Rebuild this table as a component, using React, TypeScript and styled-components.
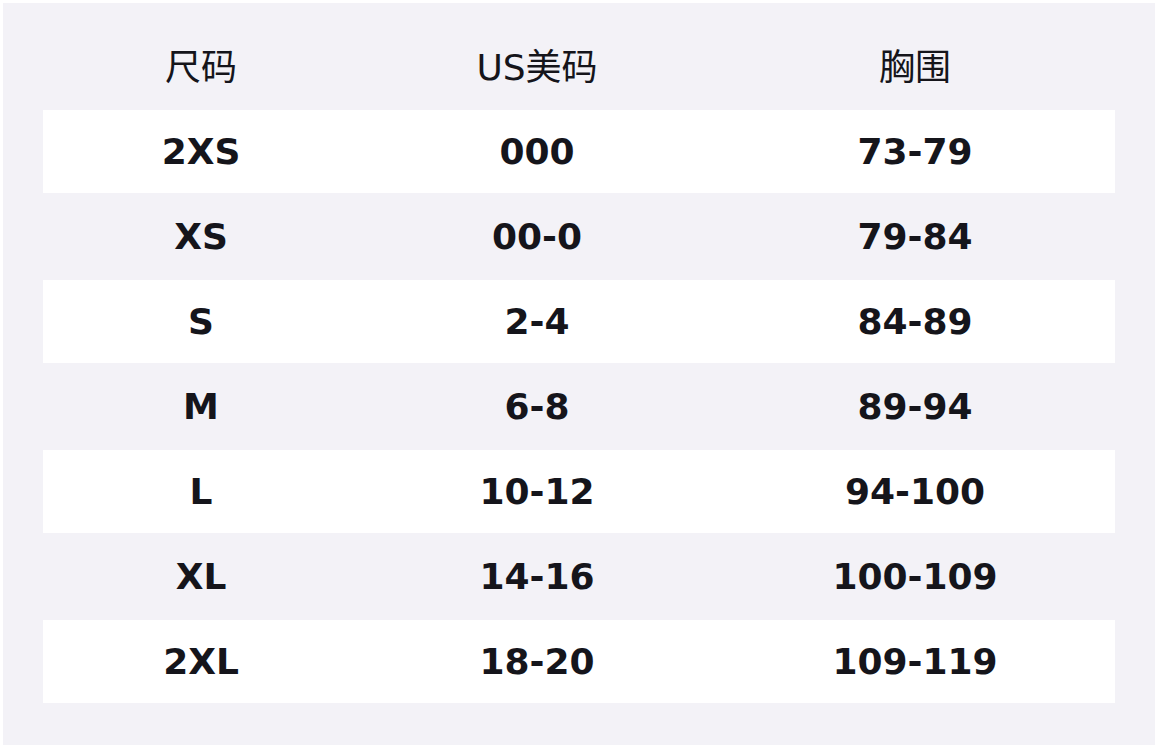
import React from "react";
import styled, { createGlobalStyle } from "styled-components";

const GlobalStyle = createGlobalStyle`
  body {
    margin: 3px;
    background-color: #ffffff;
    font-family: "DejaVu Sans", "Noto Sans CJK SC", sans-serif;
  }
`;

const Panel = styled.div`
  background-color: #f3f2f7;
  padding: 24px 40px 42px;
  color: #15151b;
`;

const Grid = styled.div`
  display: grid;
  grid-template-columns: 316fr 356fr 400fr;
  row-gap: 2px;
`;

const Row = styled.div`
  display: contents;
`;

const Cell = styled.div<{ $header?: boolean; $shaded?: boolean }>`
  display: flex;
  align-items: center;
  justify-content: center;
  box-sizing: border-box;
  height: ${(p) => (p.$header ? "81px" : "83px")};
  padding-bottom: ${(p) => (p.$header ? "8px" : "0")};
  font-size: 36px;
  font-weight: ${(p) => (p.$header ? 400 : 700)};
  background-color: ${(p) =>
    p.$header || p.$shaded ? "transparent" : "#ffffff"};
`;

const headers = ["尺码", "US美码", "胸围"];

const rows = [
  ["2XS", "000", "73-79"],
  ["XS", "00-0", "79-84"],
  ["S", "2-4", "84-89"],
  ["M", "6-8", "89-94"],
  ["L", "10-12", "94-100"],
  ["XL", "14-16", "100-109"],
  ["2XL", "18-20", "109-119"],
];

const App = () => {
  return (
    <>
      <GlobalStyle />
      <Panel>
        <Grid>
          <Row>
            {headers.map((h) => (
              <Cell key={h} $header>
                {h}
              </Cell>
            ))}
          </Row>
          {rows.map((r, i) => (
            <Row key={r[0]}>
              {r.map((v, j) => (
                <Cell key={j} $shaded={i % 2 === 1}>
                  {v}
                </Cell>
              ))}
            </Row>
          ))}
        </Grid>
      </Panel>
    </>
  );
};

export default App;
